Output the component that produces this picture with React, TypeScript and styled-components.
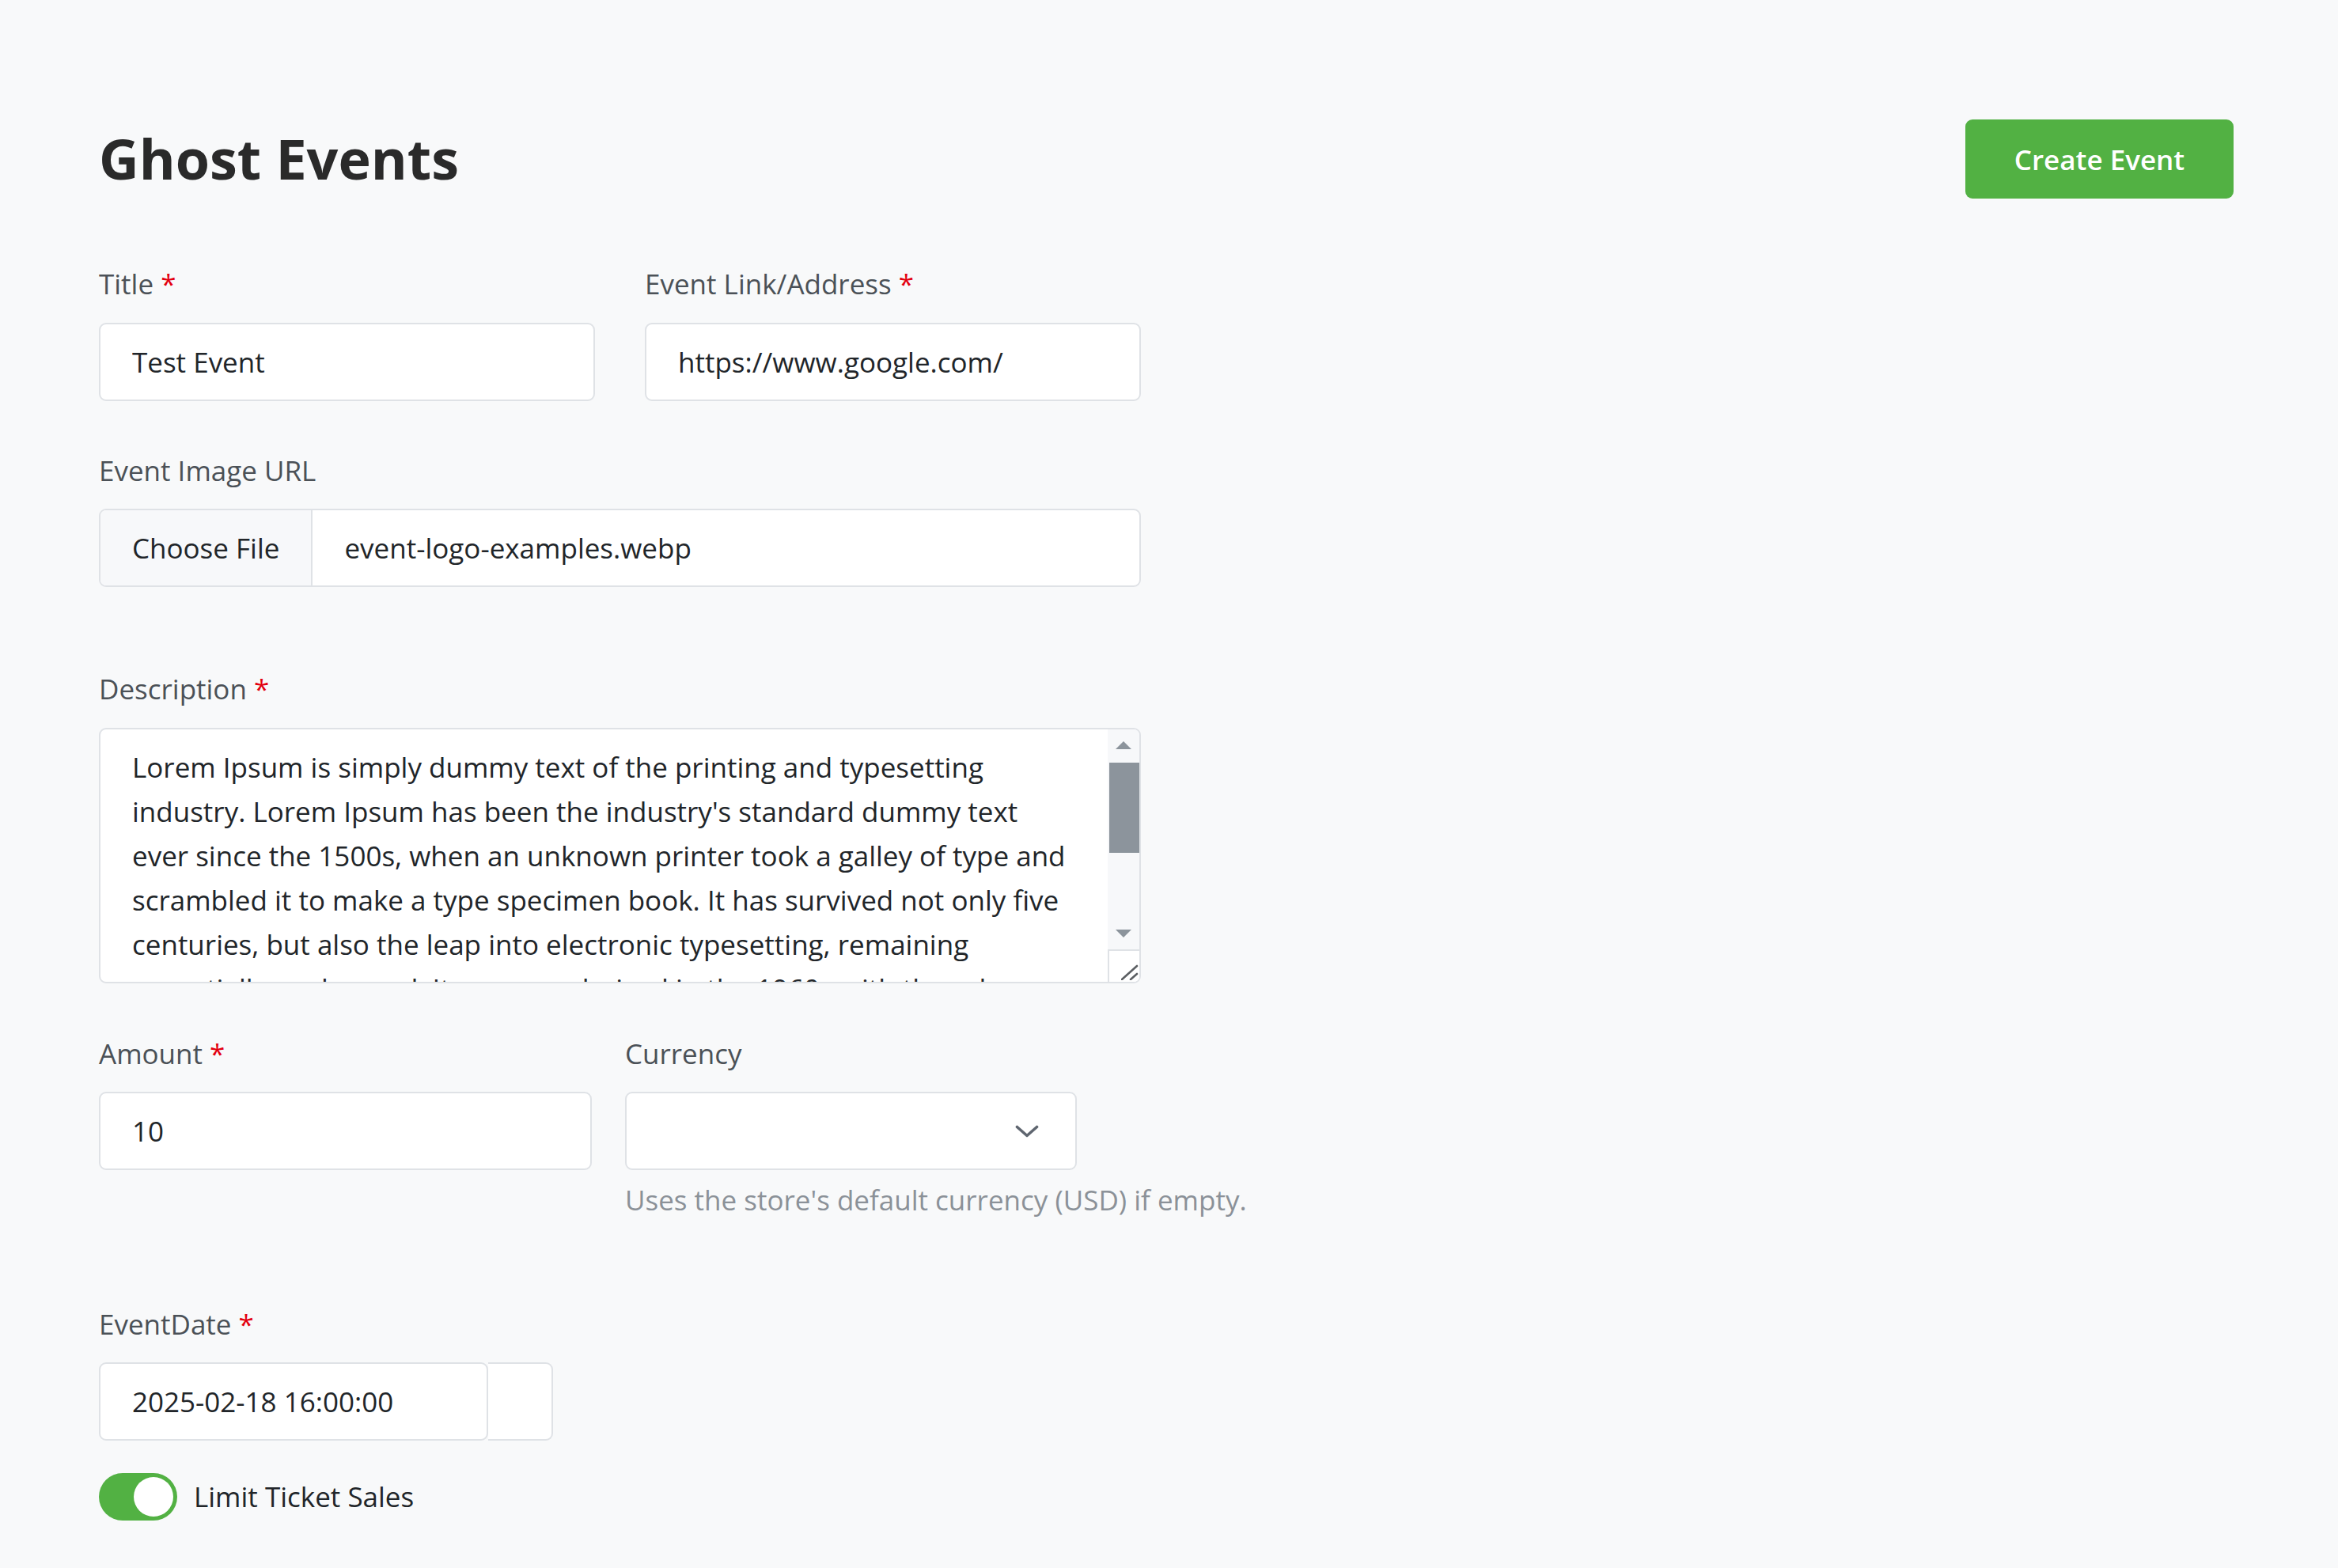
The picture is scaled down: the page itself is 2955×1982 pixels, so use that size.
import React from 'react';
import styled, { createGlobalStyle } from 'styled-components';

const FONT = '"Open Sans", "Noto Sans", sans-serif';
const FS = 35;

const Global = createGlobalStyle`
  html, body { margin: 0; padding: 0; background: #f8f9fa; }
  body { font-family: ${FONT}; color: #212529; }
  *, *::before, *::after { box-sizing: border-box; }
`;

const Page = styled.div`
  min-height: 1982px;
  padding: 151px 132px 0 125px;
  background: #f8f9fa;
`;

const Header = styled.header`
  display: flex;
  align-items: center;
  justify-content: space-between;
  height: 100px;
`;

const Heading = styled.h1`
  margin: 0;
  font-family: ${FONT};
  font-size: 70px;
  font-weight: 700;
  line-height: 1.36;
  color: #2a2a2a;
`;

const CreateButton = styled.button`
  width: 339px;
  height: 100px;
  border: none;
  border-radius: 9px;
  background: #52b143;
  color: #ffffff;
  font-family: ${FONT};
  font-size: ${FS}px;
  font-weight: 600;
  cursor: pointer;
`;

const Form = styled.form`
  margin-top: 83px;
  width: 1317px;
  display: flex;
  flex-direction: column;
`;

const Row = styled.div<{ $cols: string; $gap: number; $mb: number }>`
  display: grid;
  grid-template-columns: ${(p) => p.$cols};
  column-gap: ${(p) => p.$gap}px;
  margin-bottom: ${(p) => p.$mb}px;
`;

const Field = styled.div`
  display: flex;
  flex-direction: column;
`;

const Label = styled.label`
  font-size: ${FS}px;
  line-height: 49.5px;
  color: #4b5157;
  margin-bottom: 24px;
`;

const Star = styled.span`
  color: #e3000f;
`;

const TextInput = styled.input`
  width: 100%;
  height: 99px;
  padding: 0 40px;
  border: 2px solid #dfe2e6;
  border-radius: 9px;
  background: #ffffff;
  font-family: ${FONT};
  font-size: ${FS}px;
  color: #212529;
  outline: none;
`;

const FileBox = styled.div`
  display: flex;
  height: 99px;
  border: 2px solid #dfe2e6;
  border-radius: 9px;
  background: #ffffff;
  overflow: hidden;
`;

const ChooseButton = styled.div`
  display: flex;
  align-items: center;
  padding: 0 40px;
  background: #f7f8fa;
  border-right: 2px solid #dfe2e6;
  font-size: ${FS}px;
  color: #212529;
`;

const FileName = styled.div`
  display: flex;
  align-items: center;
  padding: 0 40px;
  font-size: ${FS}px;
  color: #212529;
`;

const TextAreaWrap = styled.div`
  position: relative;
  width: 100%;
  height: 323px;
  border: 2px solid #dfe2e6;
  border-radius: 9px;
  background: #ffffff;
  overflow: hidden;
`;

const TextArea = styled.textarea`
  display: block;
  width: 100%;
  height: 100%;
  padding: 20px 80px 20px 40px;
  border: none;
  background: transparent;
  font-family: ${FONT};
  font-size: ${FS}px;
  line-height: 56px;
  color: #212529;
  outline: none;
  resize: none;
  overflow: hidden;
`;

const ScrollBar = styled.div`
  position: absolute;
  top: 0;
  right: 0;
  bottom: 0;
  width: 40px;
  display: flex;
  flex-direction: column;
  background: #f7f8fa;
`;

const ScrollButton = styled.div`
  height: 40px;
  flex: none;
  display: flex;
  align-items: center;
  justify-content: center;
`;

const Track = styled.div`
  flex: 1;
  position: relative;
`;

const Thumb = styled.div`
  position: absolute;
  top: 2px;
  left: 2px;
  right: 0;
  height: 114px;
  background: #8c949c;
`;

const Resizer = styled.div`
  height: 41px;
  flex: none;
  background: #ffffff;
  border-top: 2px solid #dfe2e6;
  border-left: 2px solid #dfe2e6;
  display: flex;
  align-items: flex-end;
  justify-content: flex-end;
  padding: 0 1px 2px 0;
`;

const SelectBox = styled.div`
  height: 99px;
  display: flex;
  align-items: center;
  justify-content: flex-end;
  padding-right: 46px;
  border: 2px solid #dfe2e6;
  border-radius: 9px;
  background: #ffffff;
`;

const HelpText = styled.div`
  margin-top: 13px;
  font-size: ${FS}px;
  line-height: 49.5px;
  color: #8b9198;
  white-space: nowrap;
`;

const DateGroup = styled.div`
  display: flex;
  width: 574px;
`;

const DateInput = styled(TextInput)`
  width: 492px;
  flex: none;
`;

const DateAddon = styled.div`
  width: 82px;
  height: 99px;
  border: 2px solid #dfe2e6;
  border-left: none;
  border-radius: 0 9px 9px 0;
  background: #ffffff;
`;

const ToggleRow = styled.div`
  display: flex;
  align-items: center;
  gap: 21px;
  margin-top: 41px;
`;

const Switch = styled.div<{ $on: boolean }>`
  width: 99px;
  height: 60px;
  border-radius: 30px;
  background: ${(p) => (p.$on ? '#52b143' : '#dfe2e6')};
  display: flex;
  align-items: center;
  justify-content: ${(p) => (p.$on ? 'flex-end' : 'flex-start')};
  padding: 0 5px;
`;

const Knob = styled.div`
  width: 50px;
  height: 50px;
  border-radius: 50%;
  background: #ffffff;
`;

const ToggleLabel = styled.span`
  font-size: ${FS}px;
  line-height: 49.5px;
  color: #212529;
`;

const description =
  "Lorem Ipsum is simply dummy text of the printing and typesetting industry. Lorem Ipsum has been the industry's standard dummy text ever since the 1500s, when an unknown printer took a galley of type and scrambled it to make a type specimen book. It has survived not only five centuries, but also the leap into electronic typesetting, remaining essentially unchanged. It was popularised in the 1960s with the release of Letraset sheets containing Lorem Ipsum passages, and more recently with desktop publishing software like Aldus PageMaker including versions of Lorem Ipsum.";

const Chevron = () => (
  <svg width="30" height="16" viewBox="0 0 30 16" fill="none">
    <path d="M2.5 2.5 L15 13.5 L27.5 2.5" stroke="#5f6670" strokeWidth="3.6" strokeLinecap="round" strokeLinejoin="round" />
  </svg>
);

const Arrow = ({ up }: { up: boolean }) => (
  <svg width="20" height="10" viewBox="0 0 20 10">
    <path d={up ? 'M0 10 L10 0 L20 10 Z' : 'M0 0 L20 0 L10 10 Z'} fill="#8c949c" />
  </svg>
);

const Grip = () => (
  <svg width="22" height="20" viewBox="0 0 22 20" fill="none">
    <path d="M1 19 L20 2" stroke="#5c5f63" strokeWidth="2.6" strokeLinecap="round" />
    <path d="M12 19 L20 12" stroke="#5c5f63" strokeWidth="2.6" strokeLinecap="round" />
  </svg>
);

export default function App() {
  return (
    <>
      <Global />
      <Page>
        <Header>
          <Heading>Ghost Events</Heading>
          <CreateButton type="button">Create Event</CreateButton>
        </Header>
        <Form onSubmit={(e) => e.preventDefault()}>
          <Row $cols="1fr 1fr" $gap={63} $mb={63}>
            <Field>
              <Label>
                Title <Star>*</Star>
              </Label>
              <TextInput readOnly value="Test Event" />
            </Field>
            <Field>
              <Label>
                Event Link/Address <Star>*</Star>
              </Label>
              <TextInput readOnly value="https://www.google.com/" />
            </Field>
          </Row>
          <Row $cols="1fr" $gap={0} $mb={104}>
            <Field>
              <Label>Event Image URL</Label>
              <FileBox>
                <ChooseButton>Choose File</ChooseButton>
                <FileName>event-logo-examples.webp</FileName>
              </FileBox>
            </Field>
          </Row>
          <Row $cols="1fr" $gap={0} $mb={64}>
            <Field>
              <Label>
                Description <Star>*</Star>
              </Label>
              <TextAreaWrap>
                <TextArea defaultValue={description} />
                <ScrollBar>
                  <ScrollButton>
                    <Arrow up />
                  </ScrollButton>
                  <Track>
                    <Thumb />
                  </Track>
                  <ScrollButton>
                    <Arrow up={false} />
                  </ScrollButton>
                  <Resizer>
                    <Grip />
                  </Resizer>
                </ScrollBar>
              </TextAreaWrap>
            </Field>
          </Row>
          <Row $cols="623px 571px" $gap={42} $mb={107}>
            <Field>
              <Label>
                Amount <Star>*</Star>
              </Label>
              <TextInput readOnly value="10" />
            </Field>
            <Field>
              <Label>Currency</Label>
              <SelectBox>
                <Chevron />
              </SelectBox>
              <HelpText>Uses the store's default currency (USD) if empty.</HelpText>
            </Field>
          </Row>
          <Field>
            <Label>
              EventDate <Star>*</Star>
            </Label>
            <DateGroup>
              <DateInput readOnly value="2025-02-18 16:00:00" />
              <DateAddon />
            </DateGroup>
          </Field>
          <ToggleRow>
            <Switch $on={true}>
              <Knob />
            </Switch>
            <ToggleLabel>Limit Ticket Sales</ToggleLabel>
          </ToggleRow>
        </Form>
      </Page>
    </>
  );
}
